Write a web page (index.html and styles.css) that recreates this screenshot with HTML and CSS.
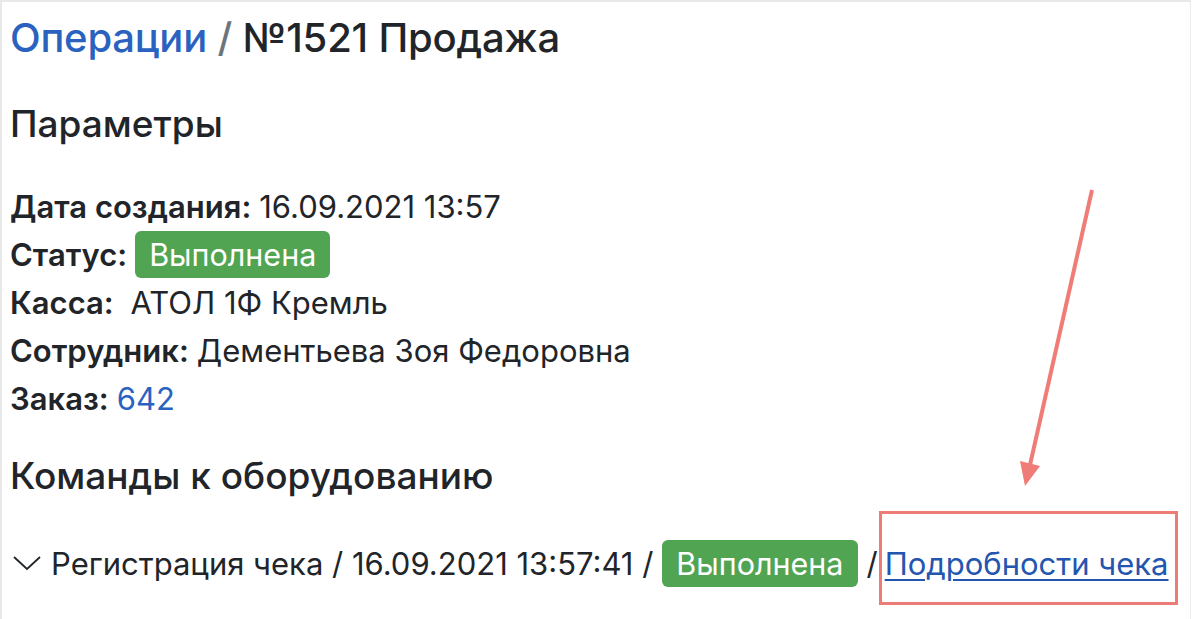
FILE: index.html
```html
<!DOCTYPE html>
<html lang="ru">
<head>
<meta charset="utf-8">
<title>Операции / №1521 Продажа</title>
<link rel="stylesheet" href="styles.css">
</head>
<body>
<div class="frame">
  <h1 class="title"><a class="link" href="#">Операции</a> <span class="sep">/</span> №1521 Продажа</h1>

  <h3 class="section section-params">Параметры</h3>
  <div class="props">
    <div class="row"><b>Дата создания:</b> 16.09.2021 13:57</div>
    <div class="row"><b>Статус:</b> <span class="badge">Выполнена</span></div>
    <div class="row"><b>Касса:</b>&nbsp;АТОЛ 1Ф Кремль</div>
    <div class="row"><b>Сотрудник:</b> Дементьева Зоя Федоровна</div>
    <div class="row"><b>Заказ:</b> <a class="link" href="#">642</a></div>
  </div>

  <h3 class="section section-cmds">Команды к оборудованию</h3>
  <div class="cmd">
    <svg class="chevron" width="30" height="16" viewBox="0 0 30 16"><path d="M2 2 L15 14 L28 2" fill="none" stroke="#212529" stroke-width="1.8"/></svg>
    <span>Регистрация чека / 16.09.2021 13:57:41 /</span>
    <span class="badge">Выполнена</span>
    <span>/</span><a class="link details" href="#">Подробности чека</a>
  </div>

  <div class="callout-box"></div>
  <svg class="callout-arrow" width="1193" height="619" viewBox="0 0 1193 619">
    <line x1="1092" y1="190" x2="1030" y2="465" stroke="#ef7c77" stroke-width="4"/>
    <polygon points="1025,486 1020,461 1040,466" fill="#ef7c77"/>
  </svg>
</div>
</body>
</html>
```

FILE: styles.css
```css
html, body {
  margin: 0;
  padding: 0;
  background: #ffffff;
}
body {
  font-family: Inter, "Noto Sans", "Liberation Sans", sans-serif;
  color: #212529;
}
.frame {
  position: relative;
  width: 1191px;
  height: 619px;
  box-sizing: border-box;
  border-top: 2px solid #e8e8e8;
  border-left: 2px solid #e8e8e8;
  border-right: 1px solid #ececec;
  padding-left: 8px;
  overflow: hidden;
}
.title {
  margin: 12px 0 0;
  font-size: 40px;
  line-height: 48px;
  font-weight: 500;
  letter-spacing: -0.2px;
}
.link {
  color: #2a62c0;
  text-decoration: none;
}
.sep {
  color: #6c757d;
}
.section {
  font-size: 37px;
  line-height: 44px;
  font-weight: 500;
  margin: 0;
}
.section-params {
  margin-top: 40px;
}
.props {
  margin-top: 36px;
}
.row {
  font-size: 31px;
  height: 48px;
  display: flex;
  align-items: center;
  gap: 8px;
}
.row b {
  font-weight: 600;
}
.badge {
  display: inline-flex;
  align-items: center;
  height: 47px;
  padding: 0 14px;
  background: #51a451;
  color: #ffffff;
  border-radius: 6px;
  font-size: 30.5px;
}
.section-cmds {
  margin-top: 32px;
}
.cmd {
  margin-top: 41px;
  height: 48px;
  display: flex;
  align-items: center;
  gap: 9px;
  font-size: 31px;
}
.chevron {
  margin-left: 2px;
  margin-right: 0;
}
.details {
  text-decoration: underline;
  text-underline-offset: 4px;
  text-decoration-thickness: 2px;
  color: #2456b0;
  margin-left: -2px;
}
.callout-box {
  position: absolute;
  left: 877px;
  top: 509px;
  width: 299px;
  height: 94px;
  border: 3px solid #ee7c76;
  box-sizing: border-box;
}
.callout-arrow {
  position: absolute;
  left: -2px;
  top: -2px;
  pointer-events: none;
}
```
